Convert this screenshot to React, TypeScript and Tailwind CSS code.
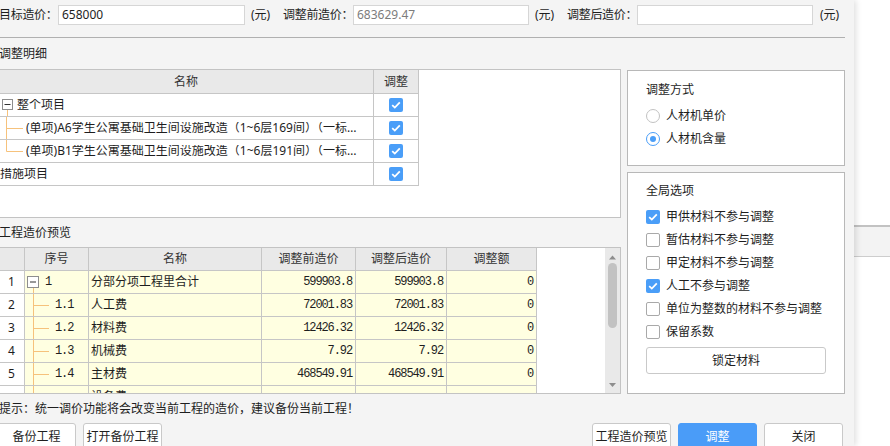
import React from "react";

// small blue checkbox used in both tables and the options panel
const Check = ({ on }: { on: boolean }) =>
  on ? (
    <span className="w-[14px] h-[14px] rounded-[2px] bg-[#4a9ef8] flex items-center justify-center shrink-0">
      <svg width="10" height="8" viewBox="0 0 10 8">
        <path d="M1.2 4.1l2.6 2.5L8.8 1.4" stroke="white" strokeWidth="1.8" fill="none" />
      </svg>
    </span>
  ) : (
    <span className="w-[14px] h-[14px] rounded-[2px] border border-[#a9a9a9] bg-white shrink-0" />
  );

const Radio = ({ on }: { on: boolean }) => (
  <span
    className={
      on
        ? "w-[14px] h-[14px] rounded-full border border-[#4a9ef8] bg-white flex items-center justify-center shrink-0"
        : "w-[14px] h-[14px] rounded-full border border-[#c2c2c2] bg-white shrink-0"
    }
  >
    {on && <span className="w-[6px] h-[6px] rounded-full bg-[#4a9ef8]" />}
  </span>
);

const TREE = "#f6c27c";

const detailRows = [
  { name: "整个项目", kind: "root" },
  { name: "(单项)A6学生公寓基础卫生间设施改造（1~6层169间）（一标段）", kind: "mid" },
  { name: "(单项)B1学生公寓基础卫生间设施改造（1~6层191间）（一标段）", kind: "last" },
  { name: "措施项目", kind: "plain" },
];

// last row is only partly visible under the scroll edge
const preview = [
  { no: "1", name: "分部分项工程里合计", before: "599903.8", after: "599903.8", diff: "0" },
  { no: "1.1", name: "人工费", before: "72001.83", after: "72001.83", diff: "0" },
  { no: "1.2", name: "材料费", before: "12426.32", after: "12426.32", diff: "0" },
  { no: "1.3", name: "机械费", before: "7.92", after: "7.92", diff: "0" },
  { no: "1.4", name: "主材费", before: "468549.91", after: "468549.91", diff: "0" },
  { no: "", name: "设备费", before: "", after: "", diff: "" },
];

const MONO = "font-['Liberation_Mono','Noto_Sans_CJK_SC',monospace] text-[12px] tracking-[-1.1px]";

const Btn = ({ label, primary, cls }: { label: string; primary?: boolean; cls?: string }) => (
  <button
    className={
      (primary
        ? "bg-[#4a9cf8] text-white border border-[#4a9cf8] "
        : "bg-white text-[#1e1e1e] border border-[#c9c9c9] ") +
      "w-[79px] h-[28px] rounded-[3px] flex items-center justify-center text-[12px] leading-none whitespace-nowrap " +
      (cls ?? "")
    }
  >
    {label}
  </button>
);

export default function App() {
  return (
    <div className="w-[890px] h-[446px] overflow-hidden bg-white flex font-['Noto_Sans','Noto_Sans_CJK_SC',sans-serif] text-[12px] text-[#1e1e1e]">
      {/* dialog */}
      <div className="w-[854px] h-full shrink-0 bg-[#f4f4f4] relative z-10 shadow-[2px_0_6px_rgba(0,0,0,0.13)] overflow-hidden">
        <div className="ml-[-2px] w-[847px]">
          {/* price inputs */}
          <div className="h-[38px] border-b border-[#b0b0b0] pt-[5px]">
            <div className="flex items-center h-[20px] pl-[1px] leading-none whitespace-nowrap">
              <span className="w-[59px] shrink-0 tracking-[-0.3px]">目标造价：</span>
              <div className="w-[187px] shrink-0 h-[20px] bg-white border border-[#d6d6d6] flex items-center pl-[3px]">658000</div>
              <span className="ml-[6px] w-[32px] shrink-0">(元)</span>
              <span className="w-[70px] shrink-0 tracking-[-0.3px]">调整前造价：</span>
              <div className="w-[176px] shrink-0 h-[20px] bg-white border border-[#d6d6d6] flex items-center pl-[3px] text-[#7c7c7c]">683629.47</div>
              <span className="ml-[6px] w-[32px] shrink-0">(元)</span>
              <span className="w-[70px] shrink-0 tracking-[-0.3px]">调整后造价：</span>
              <div className="w-[176px] shrink-0 h-[20px] bg-white border border-[#d6d6d6]" />
              <span className="ml-[7px] shrink-0">(元)</span>
            </div>
          </div>

          <div className="h-[31px] flex items-center pl-[1px] leading-none">调整明细</div>

          <div className="flex gap-[6px]">
            {/* left column */}
            <div className="w-[623px] flex flex-col">
              {/* detail table */}
              <div className="h-[149px] bg-white border border-[#c3c3c3]">
                <div className="w-[420px] flex flex-col leading-none">
                  <div className="flex h-[24px] bg-[#e9e9e9] border-b border-[#c6c6c6]">
                    <div className="w-[375px] border-r border-[#c6c6c6] flex items-center justify-center text-[#333]">名称</div>
                    <div className="w-[45px] border-r border-[#c6c6c6] flex items-center justify-center text-[#333]">调整</div>
                  </div>
                  {detailRows.map((r) => (
                    <div key={r.name} className="flex h-[23px] border-b border-[#c6c6c6]">
                      <div className="w-[375px] border-r border-[#c6c6c6] flex items-center overflow-hidden">
                        {r.kind === "root" && (
                          <svg width="18" height="22" className="shrink-0">
                            <rect x="3.5" y="5.5" width="10" height="10" fill="white" stroke="#8e8e8e" />
                            <line x1="5.5" y1="10.5" x2="11.5" y2="10.5" stroke="#333" />
                            <line x1="8.5" y1="16" x2="8.5" y2="22" stroke={TREE} />
                          </svg>
                        )}
                        {(r.kind === "mid" || r.kind === "last") && (
                          <svg width="27" height="22" className="shrink-0">
                            <line x1="7.5" y1="0" x2="7.5" y2={r.kind === "mid" ? 22 : 11.5} stroke={TREE} />
                            <line x1="7.5" y1="11.5" x2="24" y2="11.5" stroke={TREE} />
                          </svg>
                        )}
                        <span className={(r.kind === "plain" ? "pl-[1px] " : "") + "truncate pr-[8px]"}>{r.name}</span>
                      </div>
                      <div className="w-[45px] border-r border-[#c6c6c6] flex items-center justify-center">
                        <Check on />
                      </div>
                    </div>
                  ))}
                </div>
              </div>

              <div className="h-[29px] flex items-center pl-[1px] leading-none">工程造价预览</div>

              {/* preview table */}
              <div className="h-[147px] bg-white border border-[#c3c3c3] flex">
                <div className="flex-1 flex flex-col overflow-hidden">
                  <div className="flex h-[23px] shrink-0 leading-none text-[#333]">
                    <div className="w-[538px] flex bg-[#e9e9e9] border-b border-[#c6c6c6]">
                      <div className="w-[26px] border-r border-[#c6c6c6]" />
                      <div className="w-[64px] border-r border-[#c6c6c6] flex items-center justify-center">序号</div>
                      <div className="w-[173px] border-r border-[#c6c6c6] flex items-center justify-center">名称</div>
                      <div className="w-[94px] border-r border-[#c6c6c6] flex items-center justify-center">调整前造价</div>
                      <div className="w-[91px] border-r border-[#c6c6c6] flex items-center justify-center">调整后造价</div>
                      <div className="w-[90px] border-r border-[#c6c6c6] flex items-center justify-center">调整额</div>
                    </div>
                  </div>
                  <div className="flex-1 overflow-hidden">
                    {preview.map((p, i) => (
                      <div key={i} className="w-[538px] flex h-[23px] border-b border-[#c6c6c6] leading-none">
                        <div className="w-[26px] border-r border-[#c6c6c6] bg-white flex items-center justify-center">{i < 5 ? i + 1 : ""}</div>
                        <div className="w-[64px] border-r border-[#c6c6c6] bg-[#ffffe1] flex items-center">
                          {i === 0 ? (
                            <svg width="20" height="22" className="shrink-0">
                              <rect x="2.5" y="5.5" width="11" height="11" fill="white" stroke="#8e8e8e" />
                              <line x1="5" y1="11" x2="11" y2="11" stroke="#333" />
                              <line x1="8.5" y1="17" x2="8.5" y2="22" stroke={TREE} />
                            </svg>
                          ) : (
                            <svg width="30" height="22" className="shrink-0">
                              <line x1="8.5" y1="0" x2="8.5" y2="22" stroke={TREE} />
                              <line x1="8.5" y1="11.5" x2="24" y2="11.5" stroke={TREE} />
                            </svg>
                          )}
                          <span className={MONO}>{p.no}</span>
                        </div>
                        <div className="w-[173px] border-r border-[#c6c6c6] bg-[#ffffe1] flex items-center pl-[2px]">{p.name}</div>
                        <div className={"w-[94px] border-r border-[#c6c6c6] bg-[#ffffe1] flex items-center justify-end pr-[3px] " + MONO}>{p.before}</div>
                        <div className={"w-[91px] border-r border-[#c6c6c6] bg-[#ffffe1] flex items-center justify-end pr-[3px] " + MONO}>{p.after}</div>
                        <div className={"w-[90px] border-r border-[#c6c6c6] bg-[#ffffe1] flex items-center justify-end pr-[3px] " + MONO}>{p.diff}</div>
                      </div>
                    ))}
                  </div>
                </div>
                {/* scrollbar */}
                <div className="w-[15px] bg-[#e9e9e9] flex flex-col items-center">
                  <svg width="9" height="14" className="mt-[2px]">
                    <path d="M1 9.5L4.5 5.5L8 9.5Z" fill="#8d8d8d" />
                  </svg>
                  <div className="w-[9px] h-[65px] rounded-full bg-[#c2c2c2] mt-[-1px]" />
                  <div className="flex-1" />
                  <svg width="9" height="14" className="mb-[1px]">
                    <path d="M1 5L4.5 9L8 5Z" fill="#8d8d8d" />
                  </svg>
                </div>
              </div>
            </div>

            {/* right column */}
            <div className="w-[218px] flex flex-col gap-[6px] pt-[1px] leading-none">
              <div className="h-[96px] bg-white border border-[#b8b8b8] pt-[7px] pl-[18px] flex flex-col">
                <div className="h-[23px] flex items-center">调整方式</div>
                <div className="h-[23px] mt-[3px] flex items-center gap-[6px]">
                  <Radio on={false} />
                  <span>人材机单价</span>
                </div>
                <div className="h-[23px] flex items-center gap-[6px]">
                  <Radio on />
                  <span>人材机含量</span>
                </div>
              </div>
              <div className="h-[222px] bg-white border border-[#b8b8b8] pt-[6px] pl-[18px] pr-[18px] flex flex-col">
                <div className="h-[23px] flex items-center">全局选项</div>
                <div className="mt-[3px]" />
                {[
                  ["甲供材料不参与调整", true],
                  ["暂估材料不参与调整", false],
                  ["甲定材料不参与调整", false],
                  ["人工不参与调整", true],
                  ["单位为整数的材料不参与调整", false],
                  ["保留系数", false],
                ].map(([t, on]) => (
                  <div key={t as string} className="h-[23px] flex items-center gap-[6px]">
                    <Check on={on as boolean} />
                    <span>{t as string}</span>
                  </div>
                ))}
                <button className="mt-[4px] w-[180px] h-[27px] bg-white border border-[#c9c9c9] rounded-[3px] flex items-center justify-center text-[12px] leading-none text-[#1e1e1e]">
                  锁定材料
                </button>
              </div>
            </div>
          </div>

          <div className="h-[29px] flex items-center pl-[1px] leading-none">
            提示：统一调价功能将会改变当前工程的造价，建议备份当前工程！
          </div>

          <div className="flex">
            <Btn label="备份工程" cls="ml-[-1px]" />
            <Btn label="打开备份工程" cls="ml-[7px]" />
            <div className="flex-1" />
            <Btn label="工程造价预览" />
            <Btn label="调整" primary cls="ml-[7px]" />
            <Btn label="关闭" cls="ml-[7px] mr-[2px]" />
          </div>
        </div>
      </div>

      {/* page behind the dialog */}
      <div className="flex-1 pt-[225px]">
        <div className="h-[32px] border-t-2 border-t-[#c2c2c2] border-b border-b-[#cdcdcd] bg-[#f3f3f3]" />
      </div>
    </div>
  );
}
